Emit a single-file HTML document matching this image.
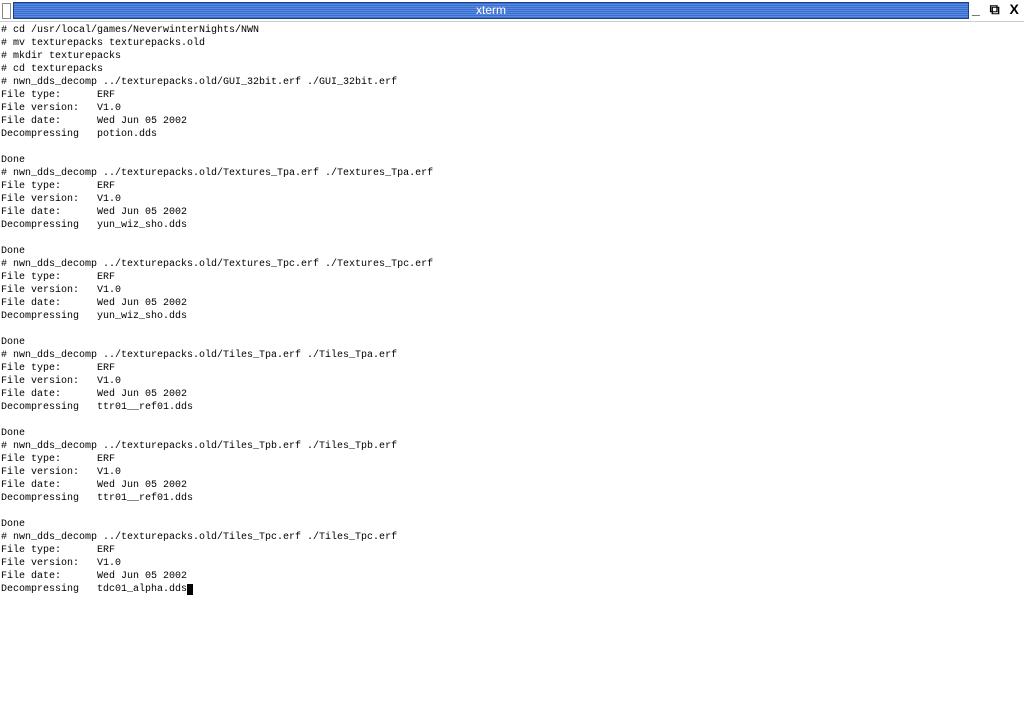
<!DOCTYPE html>
<html><head><style>
html,body{margin:0;padding:0;background:#fff;width:1024px;height:719px;overflow:hidden}
#tb{position:absolute;left:0;top:0;width:1024px;height:21px;background:#fff;border-bottom:1px solid #ccc}
#icon{position:absolute;left:2px;top:3px;width:7px;height:14px;border:1px solid #888;background:#fff}
#bar{position:absolute;left:13px;top:2px;width:954px;height:15px;border:1px solid #1c3f8c;
background:repeating-linear-gradient(#3a6fd0 0 1px,#5a8ae0 1px 2px);color:#fff;
font:12px "Liberation Sans",sans-serif;text-align:center;line-height:15px}
#btns{position:absolute;left:972px;top:1px;font:bold 14px "Liberation Sans",sans-serif;color:#000;letter-spacing:3px}
pre{position:absolute;left:1px;top:24px;margin:0;font:10px/13px "Liberation Mono",monospace;color:#000}
.cur{background:#000;color:#000}
</style></head><body>
<div id="tb"><div id="icon"></div><div id="bar">xterm</div><div id="btns">_ ⧉ X</div></div>
<pre># cd /usr/local/games/NeverwinterNights/NWN
# mv texturepacks texturepacks.old
# mkdir texturepacks
# cd texturepacks
# nwn_dds_decomp ../texturepacks.old/GUI_32bit.erf ./GUI_32bit.erf
File type:      ERF
File version:   V1.0
File date:      Wed Jun 05 2002
Decompressing   potion.dds

Done
# nwn_dds_decomp ../texturepacks.old/Textures_Tpa.erf ./Textures_Tpa.erf
File type:      ERF
File version:   V1.0
File date:      Wed Jun 05 2002
Decompressing   yun_wiz_sho.dds

Done
# nwn_dds_decomp ../texturepacks.old/Textures_Tpc.erf ./Textures_Tpc.erf
File type:      ERF
File version:   V1.0
File date:      Wed Jun 05 2002
Decompressing   yun_wiz_sho.dds

Done
# nwn_dds_decomp ../texturepacks.old/Tiles_Tpa.erf ./Tiles_Tpa.erf
File type:      ERF
File version:   V1.0
File date:      Wed Jun 05 2002
Decompressing   ttr01__ref01.dds

Done
# nwn_dds_decomp ../texturepacks.old/Tiles_Tpb.erf ./Tiles_Tpb.erf
File type:      ERF
File version:   V1.0
File date:      Wed Jun 05 2002
Decompressing   ttr01__ref01.dds

Done
# nwn_dds_decomp ../texturepacks.old/Tiles_Tpc.erf ./Tiles_Tpc.erf
File type:      ERF
File version:   V1.0
File date:      Wed Jun 05 2002
Decompressing   tdc01_alpha.dds<span class="cur">_</span></pre>
</body></html>
